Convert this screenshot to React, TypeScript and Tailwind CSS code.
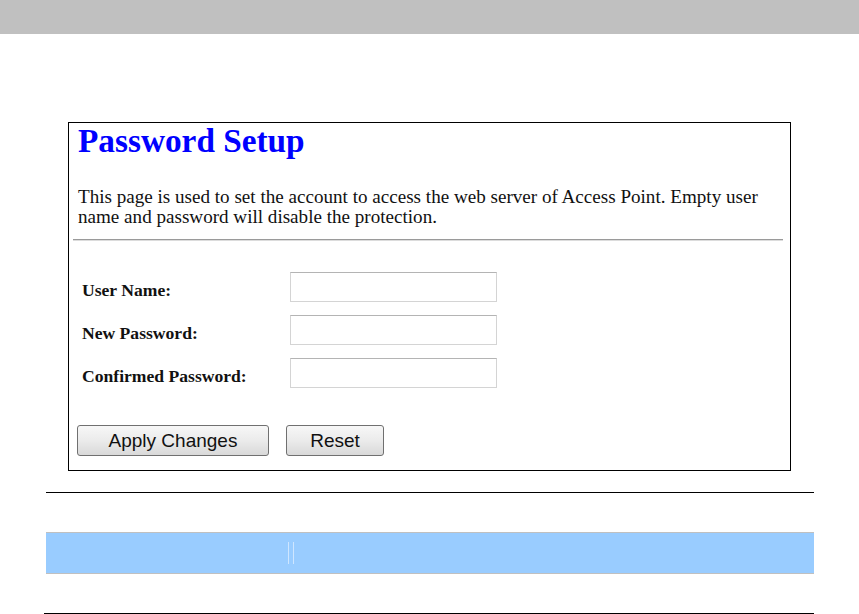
import React from "react";

const serif = { fontFamily: '"Liberation Serif", "Times New Roman", serif' };

function Field({ label }: { label: string }) {
  return (
    <div className="flex items-center h-[30px]">
      <div className="w-[221px] pl-[13px] pt-[6px] text-[17.6px] font-bold text-[#111] leading-[20px]" style={serif}>
        {label}
      </div>
      <div className="w-[207px] h-[30px] border border-[#d4d4d4] border-t-[#b4b4b4] bg-white" />
    </div>
  );
}

function Btn({ label, w }: { label: string; w: string }) {
  return (
    <button
      className={`${w} h-[31px] rounded-[3px] border border-[#707070] bg-gradient-to-b from-[#f7f7f7] via-[#ebebeb] to-[#d9d9d9] text-[19px] leading-[29px] text-[#111] text-center`}
      style={{ fontFamily: '"Liberation Sans", Arial, sans-serif' }}
    >
      {label}
    </button>
  );
}

export default function App() {
  return (
    <div className="w-[859px] h-[614px] bg-white overflow-hidden">
      <div className="h-[34px] bg-[#c0c0c0]" />
      <div className="ml-[68px] mt-[88px] w-[723px] h-[349px] border border-black flex flex-col">
        <div className="pl-[9px] pt-[2px] text-[33.3px] leading-[32px] font-bold text-[#0000ff]" style={serif}>
          Password Setup
        </div>
        <p className="pl-[9px] pr-[6px] mt-[30px] text-[19.1px] leading-[20px] text-[#111]" style={serif}>
          This page is used to set the account to access the web server of Access Point. Empty user name and password will disable the protection.
        </p>
        <div className="ml-[4px] mr-[7px] mt-[12px] h-[2px] border-t border-t-[#9a9a9a] border-b border-b-[#dcdcdc]" />
        <div className="mt-[31px] flex flex-col gap-[13px]">
          <Field label="User Name:" />
          <Field label="New Password:" />
          <Field label="Confirmed Password:" />
        </div>
        <div className="mt-[37px] pl-[8px] flex gap-[17px]">
          <Btn label="Apply Changes" w="w-[192px]" />
          <Btn label="Reset" w="w-[98px]" />
        </div>
      </div>
      <div className="ml-[46px] mt-[21px] w-[768px] h-px bg-black" />
      <div className="ml-[46px] mt-[39px] w-[768px] h-[42px] border-t border-b border-[#c0c0c0] bg-[#99ccff] flex items-center">
        <div className="w-[242px]" />
        <div className="w-[6px] h-[22px] border-l border-r border-[#cfe6ff]" />
        <div className="flex-1" />
      </div>
      <div className="ml-[44px] mt-[39px] w-[770px] h-px bg-black" />
    </div>
  );
}
